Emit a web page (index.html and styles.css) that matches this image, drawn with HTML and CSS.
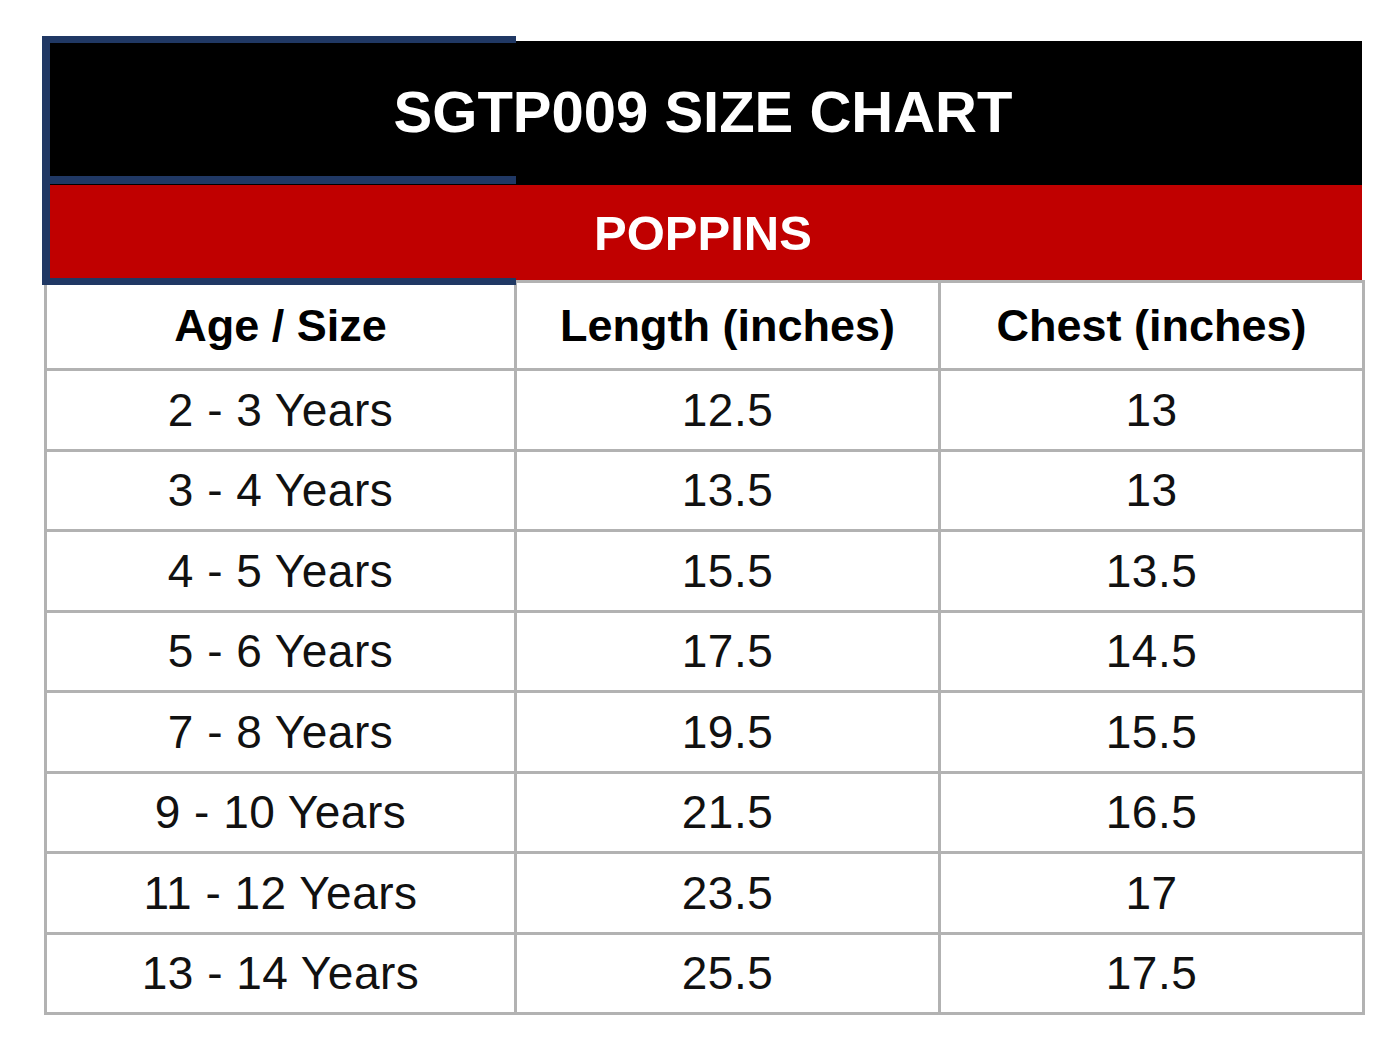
FILE: index.html
```html
<!DOCTYPE html>
<html lang="en">
<head>
<meta charset="utf-8">
<title>SGTP009 Size Chart</title>
<link rel="stylesheet" href="styles.css">
</head>
<body>
<div class="chart">
  <div class="title-bar">SGTP009 SIZE CHART</div>
  <div class="brand-bar">POPPINS</div>
  <div class="selection"></div>
  <table class="sizes">
    <colgroup>
      <col class="c1">
      <col class="c2">
      <col class="c3">
    </colgroup>
    <thead>
      <tr><th>Age / Size</th><th>Length (inches)</th><th>Chest (inches)</th></tr>
    </thead>
    <tbody>
      <tr><td>2 - 3 Years</td><td>12.5</td><td>13</td></tr>
      <tr><td>3 - 4 Years</td><td>13.5</td><td>13</td></tr>
      <tr><td>4 - 5 Years</td><td>15.5</td><td>13.5</td></tr>
      <tr><td>5 - 6 Years</td><td>17.5</td><td>14.5</td></tr>
      <tr><td>7 - 8 Years</td><td>19.5</td><td>15.5</td></tr>
      <tr><td>9 - 10 Years</td><td>21.5</td><td>16.5</td></tr>
      <tr><td>11 - 12 Years</td><td>23.5</td><td>17</td></tr>
      <tr><td>13 - 14 Years</td><td>25.5</td><td>17.5</td></tr>
    </tbody>
  </table>
</div>
</body>
</html>
```
FILE: styles.css
```css
html, body {
  margin: 0;
  padding: 0;
  background: #ffffff;
}
body {
  font-family: "Liberation Sans", Arial, Helvetica, sans-serif;
}
.chart {
  position: relative;
  width: 1320px;
  margin: 41px 0 0 44px;
}
.title-bar {
  width: 1318px;
  height: 144px;
  background: #000000;
  color: #ffffff;
  font-weight: bold;
  font-size: 58px;
  display: flex;
  align-items: center;
  justify-content: center;
  padding-bottom: 3px;
  box-sizing: border-box;
}
.brand-bar {
  width: 1318px;
  height: 95px;
  background: #c00000;
  color: #ffffff;
  font-weight: bold;
  font-size: 49px;
  display: flex;
  align-items: center;
  justify-content: center;
}
.selection {
  position: absolute;
  left: -2px;
  top: -5px;
  width: 474px;
  height: 249px;
  box-sizing: border-box;
  border: 7px solid #203864;
  border-left-width: 8px;
  border-right-width: 0;
}
.selection::after {
  content: "";
  position: absolute;
  left: 0;
  right: 0;
  top: 133px;
  height: 8px;
  background: #203864;
}
.sizes {
  border-collapse: collapse;
  table-layout: fixed;
  width: 1318px;
}
.c1 { width: 470px; }
.c2 { width: 424px; }
.c3 { width: 424px; }
.sizes th,
.sizes td {
  border: 3px solid #b2b2b2;
  text-align: center;
  vertical-align: middle;
  padding: 0;
  color: #000000;
}
.sizes th {
  height: 85px;
  font-size: 45px;
  font-weight: bold;
}
.sizes td {
  height: 77.5px;
  font-size: 46px;
  font-weight: normal;
  letter-spacing: 0.5px;
  color: #111111;
}
```
